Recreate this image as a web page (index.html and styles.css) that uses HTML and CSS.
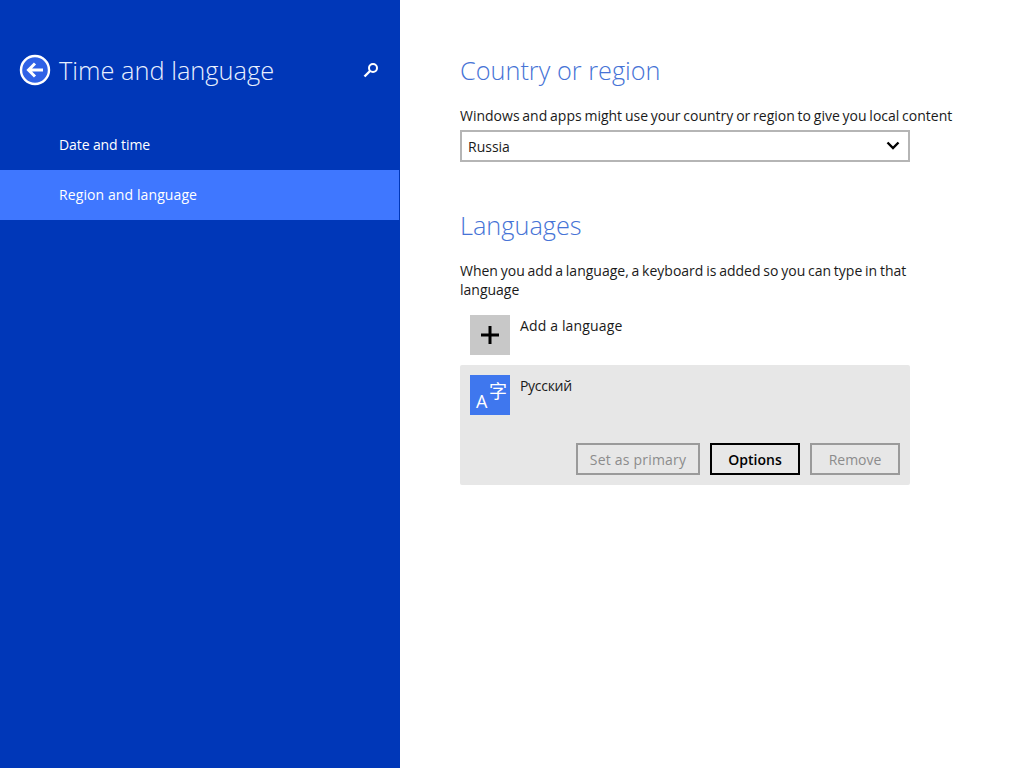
FILE: index.html
```html
<!DOCTYPE html>
<html lang="en">
<head>
    <meta charset="UTF-8">
    <meta name="viewport" content="width=device-width, initial-scale=1.0">
    <title>Time and language</title>
    <link rel="stylesheet" href="styles.css">
</head>
<body>
    <div class="sidebar">
        <div class="sidebar-header">
            <svg class="back-icon" width="32" height="32" viewBox="0 0 32 32">
                <circle cx="16" cy="16" r="14" fill="#2f62e6" stroke="#fff" stroke-width="2.4"/>
                <path d="M24 16H10M16 9.500L9.500 16l6.500 6.500" fill="none" stroke="#fff" stroke-width="3"/>
            </svg>
            <h1 class="sidebar-title">Time and language</h1>
            <svg class="search-icon" width="16" height="16" viewBox="0 0 16 16">
                <circle cx="10" cy="6" r="4" fill="none" stroke="#fff" stroke-width="2"/>
                <path d="M7 9L1.500 14.500" fill="none" stroke="#fff" stroke-width="2.400"/>
            </svg>
        </div>
        <ul class="nav">
            <li class="nav-item date-item">Date and time</li>
            <li class="nav-item active">Region and language</li>
        </ul>
    </div>

    <div class="main">
        <h2 class="heading">Country or region</h2>
        <p class="text country-text">Windows and apps might use your country or region to give you local content</p>
        <div class="select">
            <span>Russia</span>
            <svg width="14" height="10" viewBox="0 0 14 10">
                <path d="M1.500 1.500L7 7l5.500-5.500" fill="none" stroke="#000" stroke-width="2.400"/>
            </svg>
        </div>

        <h2 class="heading languages-heading">Languages</h2>
        <p class="text languages-text">When you add a language, a keyboard is added so you can type in that language</p>

        <div class="add-row">
            <div class="tile add-tile">
                <svg width="20" height="20" viewBox="0 0 20 20">
                    <path d="M10 1v18M1 10h18" fill="none" stroke="#000" stroke-width="3"/>
                </svg>
            </div>
            <span class="row-label add-label">Add a language</span>
        </div>

        <div class="language-card">
            <div class="language-top">
                <div class="tile lang-tile">
                    <span class="lang-a">A</span>
                    <span class="lang-zi">字</span>
                </div>
                <span class="row-label lang-label">Русский</span>
            </div>
            <div class="buttons">
                <button class="btn btn-primary-lang" disabled>Set as primary</button>
                <button class="btn btn-options">Options</button>
                <button class="btn btn-remove" disabled>Remove</button>
            </div>
        </div>
    </div>
</body>
</html>
```

FILE: styles.css
```css
* {
    margin: 0;
    padding: 0;
    box-sizing: border-box;
}

body {
    width: 1024px;
    height: 768px;
    display: flex;
    overflow: hidden;
    background-color: #fff;
    font-family: "Open Sans", "Noto Sans", sans-serif;
    font-size: 14px;
    color: #1a1a1a;
}

.sidebar {
    width: 400px;
    height: 768px;
    flex-shrink: 0;
    padding-right: 1px;
    background-color: #0037b8;
    color: #fff;
}

.sidebar-header {
    height: 120px;
    padding: 54px 20px 0 19px;
    display: flex;
    align-items: flex-start;
}

.back-icon {
    flex-shrink: 0;
}

.sidebar-title {
    flex: 1;
    margin-top: -1px;
    margin-left: 8px;
    font-size: 25.4px;
    font-weight: 300;
    line-height: 34px;
    color: #e8f0ff;
}

.search-icon {
    margin-top: 8px;
}

.nav {
    list-style: none;
}

.nav-item {
    height: 50px;
    padding-left: 59px;
    line-height: 49px;
    font-size: 14px;
    letter-spacing: 0.1px;
}

.date-item {
    letter-spacing: -0.1px;
}

.nav-item.active {
    background-color: #3f77ff;
}

.main {
    flex: 1;
    padding: 53px 0 0 60px;
}

.heading {
    font-size: 25.3px;
    font-weight: 300;
    line-height: 34px;
    color: #4673d6;
}

.text {
    line-height: 19px;
    font-size: 14px;
    word-spacing: -0.85px;
}

.country-text {
    width: 500px;
    margin-top: 19px;
}

.select {
    width: 450px;
    height: 32px;
    margin-top: 5px;
    padding: 0 8px 0 6px;
    display: flex;
    justify-content: space-between;
    align-items: center;
    border: 2px solid #b5b5b5;
}

.languages-heading {
    margin-top: 46px;
}

.languages-text {
    width: 455px;
    margin-top: 19px;
}

.add-row {
    height: 40px;
    margin-top: 16px;
    padding-left: 10px;
    display: flex;
    align-items: flex-start;
}

.tile {
    position: relative;
    width: 40px;
    height: 40px;
    flex-shrink: 0;
    display: flex;
    justify-content: center;
    align-items: center;
}

.add-tile {
    background-color: #c8c8c8;
}

.row-label {
    margin-top: 1px;
    margin-left: 10px;
    line-height: 20px;
}

.add-label {
    letter-spacing: 0.15px;
}

.lang-label {
    letter-spacing: -0.3px;
}

.language-card {
    width: 450px;
    height: 120px;
    margin-top: 10px;
    padding: 10px;
    border-radius: 2px;
    background-color: #e7e7e7;
}

.language-top {
    height: 68px;
    display: flex;
    align-items: flex-start;
}

.lang-tile {
    background-color: #3f77ee;
    color: #fff;
}

.lang-a {
    position: absolute;
    left: 6px;
    bottom: 4px;
    font-size: 18px;
    line-height: 20px;
}

.lang-zi {
    position: absolute;
    right: 3px;
    top: 5px;
    font-family: "Noto Sans CJK SC", sans-serif;
    font-size: 18px;
    line-height: 20px;
}

.buttons {
    display: flex;
    justify-content: flex-end;
    gap: 10px;
}

.btn {
    height: 32px;
    border: 2px solid #9a9a9a;
    background-color: transparent;
    font-family: inherit;
    font-size: 14px;
    color: #8c8c8c;
}

.btn-primary-lang {
    width: 124px;
    letter-spacing: 0.2px;
}

.btn-options {
    width: 90px;
    border-color: #000;
    color: #000;
    font-weight: 600;
}

.btn-remove {
    width: 90px;
}
```
